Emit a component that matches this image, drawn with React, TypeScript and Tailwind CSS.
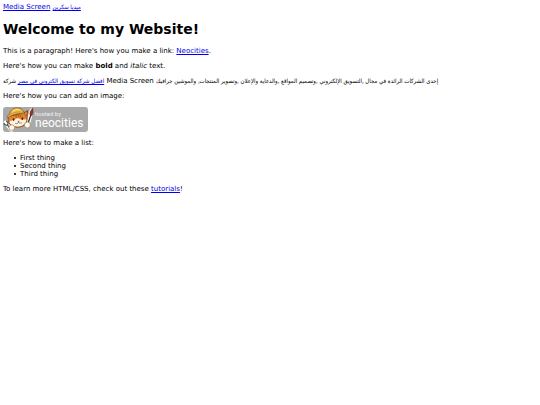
import type { ReactNode } from "react";

interface TextLinkProps {
  href: string;
  children: ReactNode;
}

const things = ["First thing", "Second thing", "Third thing"];

const TextLink = ({ href, children }: TextLinkProps) => (
  <a href={href} className="text-[#0000ee] underline">
    {children}
  </a>
);

const Arabic = ({ children }: { children: ReactNode }) => (
  <span lang="ar" className="font-['DejaVu_Sans_Condensed','DejaVu_Sans',sans-serif] text-[6px] leading-none">
    {children}
  </span>
);

const NeocitiesLogo = () => (
  <svg viewBox="0 0 85 25" className="block w-[85px] h-[25px]" role="img" aria-label="Hosted by Neocities">
    <rect width="85" height="25" rx="3" fill="#a9a9a9" />

    {/* Wrench */}
    <path d="M2.6 15.6 8.4 22.6" stroke="#fff" strokeWidth="4" strokeLinecap="round" />
    <path d="M.9 15.8C1.4 18.2 3.4 18.6 4.4 18L8.4 22.8M4.4 18C5.6 16.8 5 14.8 3.2 14.2" fill="none" stroke="#55575b" strokeWidth="1.3" />

    {/* Brush */}
    <path d="M25.4 15.5 28.6 3.5" stroke="#fff" strokeWidth="4" strokeLinecap="round" />
    <path d="M25.2 16 27.8 8" stroke="#4b2a1c" strokeWidth="1.3" />
    <path d="M27 8C26.6 5 27.6 3 29.8 1.2 30.6 3.8 30.2 6.6 28.8 8.8Z" fill="#a82c22" stroke="#4b2a1c" strokeWidth=".5" />

    {/* Head */}
    <path d="M5.6 9.4C4.6 13 5.4 16.8 8.8 18.8 13 21.2 20 20.4 22.8 16.6 24.4 14 24.2 11.2 24 8.8L24.6 3.6 20.4 6Z" fill="#e8832c" stroke="#6e3b16" strokeWidth=".8" />
    <path d="M6.4 14.6C8.4 13.2 11.4 13.6 13.8 11.6 15.2 10.8 16.2 11.4 17 12.2 19.4 13.4 21.6 12 23.4 12.8 22.6 17.6 18.4 19.6 14 19.6 9.8 19.4 6.8 17.4 6.4 14.6Z" fill="#fff5e6" />
    <path d="M13 8.2 13.4 10.6M15.6 7.8V10.2M18 7.6 17.6 9.8M21.6 8.8 23.4 8" stroke="#8d4318" strokeWidth=".7" />
    <ellipse cx="10.6" cy="12.6" rx=".8" ry="1.3" fill="#3a2116" />
    <ellipse cx="19.4" cy="11.6" rx=".8" ry="1.3" fill="#3a2116" />
    <path d="M14.4 14 16.6 13.8 15.6 15.2Z" fill="#9b382a" />
    <path d="M15.6 15.2C15 16.8 13.4 17 12.2 16.2M15.6 15.2C16.4 16.6 18.2 16.4 19 15.4" fill="none" stroke="#6e3b16" strokeWidth=".6" />

    {/* Helmet */}
    <path d="M6.4 7.4C7.4 2.6 10.8.6 14.6.8 18.2 1 20.2 2.8 20.8 5.4L21.8 7C16.4 5.8 10.4 7 4.6 10.8L4 9.4Z" fill="#edb94b" stroke="#80541c" strokeWidth=".7" />
    <path d="M9.4 5.4C10.8 2.8 13.8 2 16.8 3" fill="none" stroke="#ffe69a" strokeWidth="1" />
    <path d="M6.4 7.8C10.6 5 16 4.4 20.6 5.6" fill="none" stroke="#b67a29" strokeWidth=".6" />

    {/* Paws */}
    <ellipse cx="8.8" cy="20.6" rx="2.9" ry="2.8" fill="#fffaf0" stroke="#9a6a3c" strokeWidth=".6" />
    <ellipse cx="24.4" cy="18" rx="3" ry="3" fill="#fffaf0" stroke="#9a6a3c" strokeWidth=".6" />

    <text x="32" y="9" fill="#f0f0f0" className="font-[Roboto,sans-serif] text-[6px]">
      hosted by
    </text>
    <text x="32" y="20" fill="#fff" className="font-[Roboto,sans-serif] text-[12px]">
      neocities
    </text>
  </svg>
);

const App = () => {
  return (
    <main className="flex flex-col gap-[7px] px-[3px] pt-[3px] bg-white text-black font-['DejaVu_Sans',sans-serif] text-[7px] leading-[8px]">
      <nav>
        <TextLink href="#media-screen">Media Screen</TextLink>{" "}
        <TextLink href="#media-screen-ar">
          <Arabic>ميديا سكرين</Arabic>
        </TextLink>
      </nav>

      <h1 className="my-[3px] text-[14px] leading-4 font-bold">Welcome to my Website!</h1>

      <p>
        This is a paragraph! Here's how you make a link: <TextLink href="#neocities">Neocities</TextLink>.
      </p>

      <p>
        Here's how you can make <strong>bold</strong> and <em>italic</em> text.
      </p>

      <p>
        <Arabic>
          <TextLink href="#marketing">افضل شركة تسويق الكترونى فى مصر</TextLink> شركة
        </Arabic>{" "}
        Media Screen{" "}
        <Arabic>
          إحدى الشركات الرائدة في مجال ,التسويق الإلكتروني ,وتصميم المواقع ,والدعاية والإعلان ,وتصوير المنتجات,
          والموشين جرافيك
        </Arabic>
      </p>

      <p>Here's how you can add an image:</p>

      <NeocitiesLogo />

      <p>Here's how to make a list:</p>

      <ul className="pl-[11px]">
        {things.map((thing) => (
          <li
            key={thing}
            className="flex items-center gap-1 before:size-[2px] before:rounded-full before:bg-black before:content-['']"
          >
            {thing}
          </li>
        ))}
      </ul>

      <p>
        To learn more HTML/CSS, check out these <TextLink href="#tutorials">tutorials</TextLink>!
      </p>
    </main>
  );
};

export default App;
